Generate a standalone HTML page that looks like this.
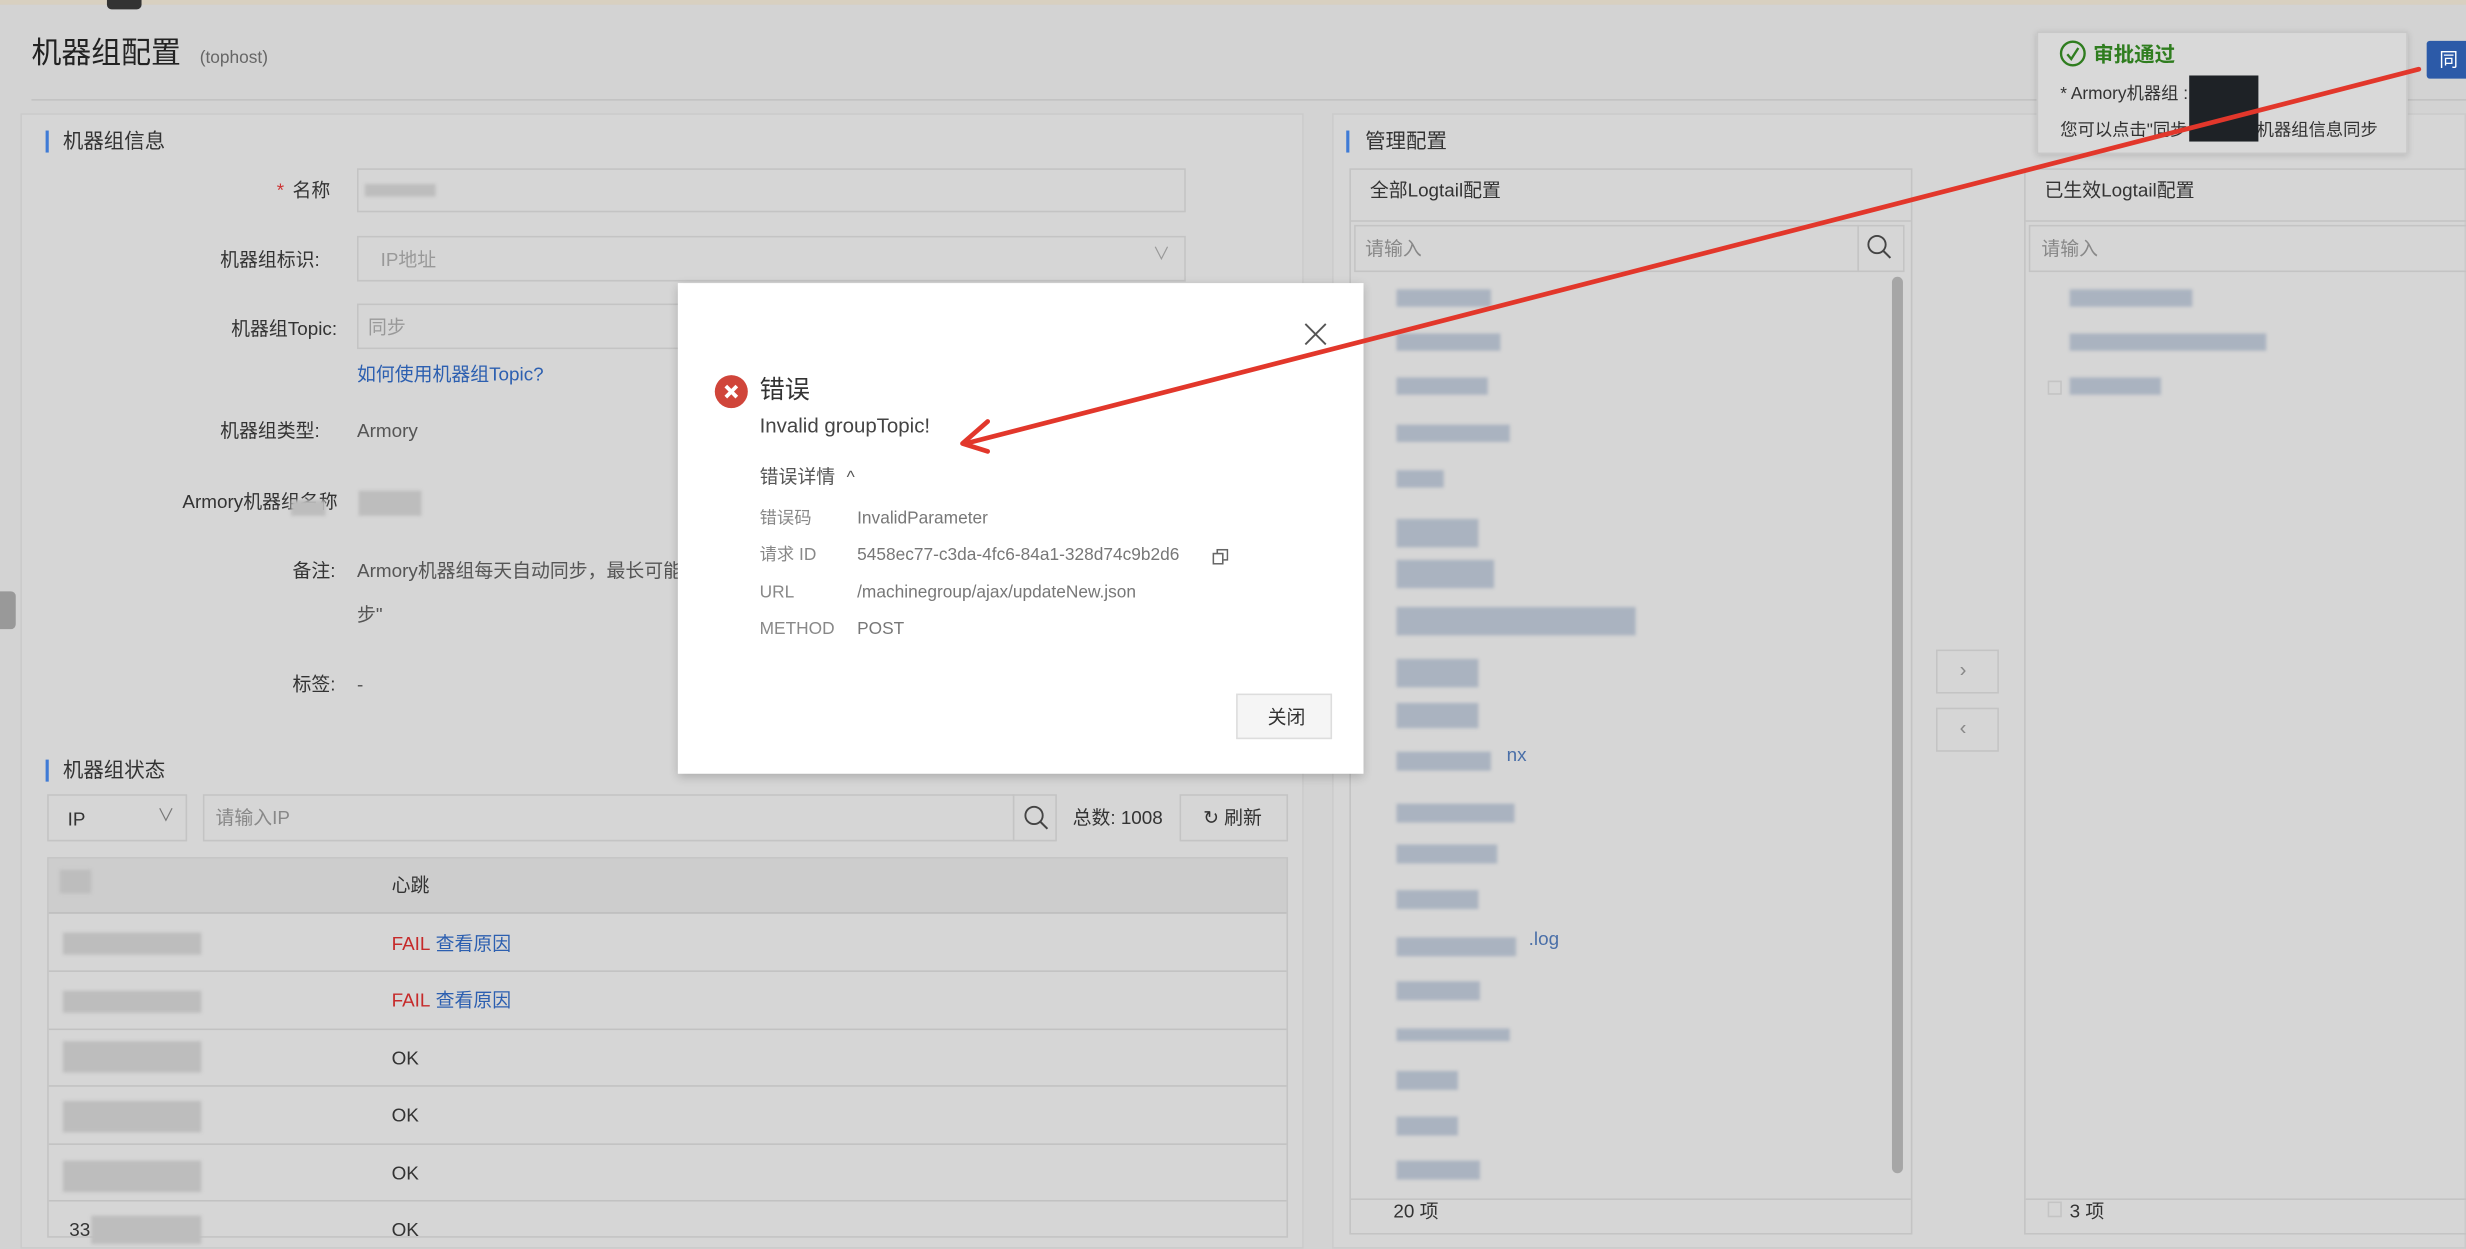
<!DOCTYPE html>
<html><head><meta charset="utf-8">
<style>
*{box-sizing:border-box;margin:0;padding:0}
html,body{width:2466px;height:1248px;overflow:hidden;background:#d3d3d3}
#w{position:absolute;left:0;top:0;width:1568px;height:794px;transform:scale(1.57270);transform-origin:0 0;font-family:"Liberation Sans","Noto Sans CJK SC",sans-serif;color:#333;font-size:12px;background:#d3d3d3}
.a{position:absolute}
.t{position:absolute;white-space:nowrap;line-height:1}
.box{position:absolute;border:1px solid #c4c4c4}
.lbl{position:absolute;right:1355px;white-space:nowrap;font-size:12px;color:#2e2e2e;line-height:1}
.bar{position:absolute;width:2px;height:14px;background:#3f7bd6}
.blur{position:absolute;background:#aab3c0;filter:blur(1px)}
.g{position:absolute;background:#bdbdbd;filter:blur(1px)}
</style></head><body><div id="w">
<div class="a" style="left:0;top:0;width:1568px;height:3px;background:#d8d0c0"></div>
<div class="a" style="left:68px;top:0;width:22px;height:6px;background:#333;border-radius:0 0 3px 3px"></div>
<div class="t" style="left:20px;top:25px;font-size:19px;color:#222">机器组配置</div>
<div class="t" style="left:127px;top:32px;font-size:11px;color:#666">(tophost)</div>
<div class="a" style="left:20px;top:63px;width:1548px;height:1px;background:#c2c2c2"></div>
<div class="a" style="left:0;top:376px;width:10px;height:24px;background:#999;border-radius:0 3px 3px 0"></div>

<!-- left panel -->
<div class="a" style="left:13px;top:72px;width:816px;height:722px;background:#d6d6d6;border:1px solid #cbcbcb"></div>
<div class="bar" style="left:29px;top:83px"></div>
<div class="t" style="left:40px;top:83px;font-size:13px;color:#333">机器组信息</div>

<div class="t" style="left:176px;top:115px;color:#c33">*</div><div class="t" style="left:186px;top:115px">名称</div>
<div class="box" style="left:227px;top:107px;width:527px;height:28px"></div>
<div class="g" style="left:232px;top:117px;width:45px;height:8px"></div>
<div class="t" style="left:140px;top:159px">机器组标识:</div>
<div class="box" style="left:227px;top:150px;width:527px;height:29px"></div>
<div class="t" style="left:242px;top:159px;color:#999">IP地址</div>
<div class="t" style="left:733px;top:157px;color:#999;font-size:11px">∨</div>
<div class="t" style="left:147px;top:203px">机器组Topic:</div>
<div class="box" style="left:227px;top:193px;width:260px;height:29px"></div>
<div class="t" style="left:234px;top:202px;color:#999">同步</div>
<div class="t" style="left:227px;top:232px;color:#2c5fb0">如何使用机器组Topic?</div>
<div class="t" style="left:140px;top:268px">机器组类型:</div>
<div class="t" style="left:227px;top:268px;color:#555">Armory</div>
<div class="t" style="left:116px;top:313px">Armory机器组名称</div>
<div class="g" style="left:185px;top:318px;width:22px;height:10px"></div>
<div class="g" style="left:228px;top:312px;width:40px;height:16px"></div>
<div class="t" style="left:186px;top:357px">备注:</div>
<div class="t" style="left:227px;top:357px;color:#555">Armory机器组每天自动同步，最长可能天</div>
<div class="t" style="left:227px;top:385px;color:#555">步"</div>
<div class="t" style="left:186px;top:429px">标签:</div>
<div class="t" style="left:227px;top:429px;color:#555">-</div>

<div class="bar" style="left:29px;top:483px"></div>
<div class="t" style="left:40px;top:483px;font-size:13px">机器组状态</div>
<div class="box" style="left:30px;top:505px;width:89px;height:30px"></div>
<div class="t" style="left:43px;top:515px">IP</div>
<div class="t" style="left:100px;top:514px;color:#777;font-size:11px">∨</div>
<div class="box" style="left:129px;top:505px;width:543px;height:30px"></div>
<div class="a" style="left:644px;top:505px;width:1px;height:30px;background:#c4c4c4"></div>
<div class="t" style="left:137px;top:514px;color:#888">请输入IP</div>
<svg class="a" style="left:650px;top:511px" width="18" height="18"><circle cx="7.5" cy="7.5" r="5.5" fill="none" stroke="#444" stroke-width="1.2"/><path d="M11.5 11.5L16 16" stroke="#444" stroke-width="1.3"/></svg>
<div class="t" style="left:682px;top:514px">总数: 1008</div>
<div class="box" style="left:750px;top:505px;width:69px;height:30px"></div>
<div class="t" style="left:765px;top:514px">↻ 刷新</div>

<div class="box" style="left:30px;top:545px;width:789px;height:242px"></div>
<div class="a" style="left:31px;top:546px;width:787px;height:34px;background:#cdcdcd"></div>
<div class="t" style="left:249px;top:557px">心跳</div>
<div class="g" style="left:38px;top:553px;width:20px;height:15px"></div>
<div class="a" style="left:31px;top:580px;width:787px;height:1px;background:#bcbcbc"></div>
<div class="a" style="left:31px;top:617px;width:787px;height:1px;background:#c2c2c2"></div>
<div class="a" style="left:31px;top:654px;width:787px;height:1px;background:#c2c2c2"></div>
<div class="a" style="left:31px;top:690px;width:787px;height:1px;background:#c2c2c2"></div>
<div class="a" style="left:31px;top:727px;width:787px;height:1px;background:#c2c2c2"></div>
<div class="a" style="left:31px;top:763px;width:787px;height:1px;background:#c2c2c2"></div>
<div class="g" style="left:40px;top:593px;width:88px;height:14px"></div>
<div class="g" style="left:40px;top:630px;width:88px;height:14px"></div>
<div class="g" style="left:40px;top:662px;width:88px;height:20px"></div>
<div class="g" style="left:40px;top:700px;width:88px;height:20px"></div>
<div class="g" style="left:40px;top:738px;width:88px;height:20px"></div>
<div class="g" style="left:58px;top:773px;width:70px;height:18px"></div>
<div class="t" style="left:249px;top:594px;color:#c62a2a">FAIL</div><div class="t" style="left:277px;top:594px;color:#2c5fb0">查看原因</div>
<div class="t" style="left:249px;top:630px;color:#c62a2a">FAIL</div><div class="t" style="left:277px;top:630px;color:#2c5fb0">查看原因</div>
<div class="t" style="left:249px;top:667px">OK</div>
<div class="t" style="left:249px;top:703px">OK</div>
<div class="t" style="left:249px;top:740px">OK</div>
<div class="t" style="left:44px;top:776px">33</div>
<div class="t" style="left:249px;top:776px">OK</div>

<!-- right panel -->
<div class="a" style="left:847px;top:72px;width:721px;height:722px;background:#d6d6d6;border:1px solid #cbcbcb"></div>
<div class="bar" style="left:856px;top:83px"></div>
<div class="t" style="left:868px;top:83px;font-size:13px">管理配置</div>
<div class="box" style="left:858px;top:107px;width:358px;height:678px"></div>
<div class="a" style="left:859px;top:140px;width:356px;height:1px;background:#c4c4c4"></div>
<div class="t" style="left:871px;top:115px">全部Logtail配置</div>
<div class="box" style="left:861px;top:143px;width:350px;height:30px"></div>
<div class="a" style="left:1181px;top:143px;width:1px;height:30px;background:#c4c4c4"></div>
<div class="t" style="left:868px;top:152px;color:#888">请输入</div>
<svg class="a" style="left:1186px;top:148px" width="18" height="18"><circle cx="7.5" cy="7.5" r="5.5" fill="none" stroke="#444" stroke-width="1.2"/><path d="M11.5 11.5L16 16" stroke="#444" stroke-width="1.3"/></svg>
<div class="a" style="left:1203px;top:176px;width:7px;height:570px;background:#a6a6a6;border-radius:4px"></div>
<div class="a" style="left:859px;top:762px;width:356px;height:1px;background:#c4c4c4"></div>
<div class="t" style="left:886px;top:764px">20 项</div>
<div class="blur" style="left:888px;top:184px;width:60px;height:11px"></div>
<div class="blur" style="left:888px;top:212px;width:66px;height:11px"></div>
<div class="blur" style="left:888px;top:240px;width:58px;height:11px"></div>
<div class="blur" style="left:888px;top:270px;width:72px;height:11px"></div>
<div class="blur" style="left:888px;top:299px;width:30px;height:11px"></div>
<div class="blur" style="left:888px;top:330px;width:52px;height:18px"></div>
<div class="blur" style="left:888px;top:356px;width:62px;height:18px"></div>
<div class="blur" style="left:888px;top:386px;width:152px;height:18px"></div>
<div class="blur" style="left:888px;top:419px;width:52px;height:18px"></div>
<div class="blur" style="left:888px;top:447px;width:52px;height:16px"></div>
<div class="blur" style="left:888px;top:478px;width:60px;height:12px"></div>
<div class="blur" style="left:888px;top:511px;width:75px;height:12px"></div>
<div class="blur" style="left:888px;top:537px;width:64px;height:12px"></div>
<div class="blur" style="left:888px;top:566px;width:52px;height:12px"></div>
<div class="blur" style="left:888px;top:596px;width:76px;height:12px"></div>
<div class="blur" style="left:888px;top:624px;width:53px;height:12px"></div>
<div class="blur" style="left:888px;top:654px;width:72px;height:8px"></div>
<div class="blur" style="left:888px;top:681px;width:39px;height:12px"></div>
<div class="blur" style="left:888px;top:710px;width:39px;height:12px"></div>
<div class="blur" style="left:888px;top:738px;width:53px;height:12px"></div>
<div class="t" style="left:958px;top:474px;color:#4a6fa8">nx</div>
<div class="t" style="left:972px;top:591px;color:#4a6fa8">.log</div>

<div class="box" style="left:1231px;top:413px;width:40px;height:28px"></div>
<div class="t" style="left:1246px;top:419px;color:#888;font-size:13px">›</div>
<div class="box" style="left:1231px;top:450px;width:40px;height:28px"></div>
<div class="t" style="left:1246px;top:456px;color:#888;font-size:13px">‹</div>

<div class="box" style="left:1287px;top:107px;width:290px;height:678px"></div>
<div class="a" style="left:1288px;top:140px;width:280px;height:1px;background:#c4c4c4"></div>
<div class="t" style="left:1300px;top:115px">已生效Logtail配置</div>
<div class="box" style="left:1290px;top:143px;width:290px;height:30px"></div>
<div class="t" style="left:1298px;top:152px;color:#888">请输入</div>
<div class="blur" style="left:1316px;top:184px;width:78px;height:11px"></div>
<div class="blur" style="left:1316px;top:212px;width:125px;height:11px"></div>
<div class="blur" style="left:1316px;top:240px;width:58px;height:11px"></div>
<div class="box" style="left:1302px;top:242px;width:9px;height:9px"></div>
<div class="a" style="left:1288px;top:762px;width:280px;height:1px;background:#c4c4c4"></div>
<div class="box" style="left:1302px;top:764px;width:9px;height:10px"></div>
<div class="t" style="left:1316px;top:764px">3 项</div>

<!-- popover -->
<div class="a" style="left:1295px;top:20px;width:236px;height:78px;background:#d9d9d9;border:1px solid #c8c8c8;box-shadow:0 1px 4px rgba(0,0,0,.15)"></div>
<svg class="a" style="left:1309px;top:25px" width="18" height="18"><circle cx="9" cy="9" r="7.5" fill="none" stroke="#2f7d1f" stroke-width="1.5"/><path d="M5.5 9.5l2.5 3 4.5-7" fill="none" stroke="#2f7d1f" stroke-width="1.5"/></svg>
<div class="t" style="left:1331px;top:28px;font-size:13px;color:#2f7d1f;font-weight:bold">审批通过</div>
<div class="t" style="left:1310px;top:55px;font-size:11px">* Armory机器组 :</div>
<div class="t" style="left:1310px;top:78px;font-size:11px">您可以点击"同步　　　　机器组信息同步</div>
<div class="a" style="left:1392px;top:48px;width:44px;height:42px;background:#1e2226"></div>
<div class="a" style="left:1543px;top:26px;width:25px;height:24px;background:#2c5aa8;border-radius:2px 0 0 2px"></div>
<div class="t" style="left:1551px;top:32px;color:#fff;font-size:12px">同</div>

<!-- dialog -->
<div class="a" style="left:431px;top:180px;width:436px;height:312px;background:#fff;box-shadow:0 2px 6px rgba(0,0,0,.2)"></div>
<svg class="a" style="left:829px;top:205px" width="15" height="15"><path d="M1 1L14 14M14 1L1 14" stroke="#555" stroke-width="1.2"/></svg>
<svg class="a" style="left:454px;top:238px" width="22" height="22"><circle cx="11" cy="11" r="10.5" fill="#d0453a"/><path d="M7.5 7.5l7 7M14.5 7.5l-7 7" stroke="#fff" stroke-width="2.4"/></svg>
<div class="t" style="left:483px;top:241px;font-size:16px;color:#333">错误</div>
<div class="t" style="left:483px;top:264px;font-size:13px;color:#444">Invalid groupTopic!</div>
<div class="t" style="left:483px;top:297px;font-size:12px;color:#555">错误详情 <span style="font-size:11px;margin-left:4px">^</span></div>
<div class="t" style="left:483px;top:325px;font-size:11px;color:#888">错误码</div><div class="t" style="left:545px;top:325px;font-size:11px;color:#777">InvalidParameter</div>
<div class="t" style="left:483px;top:348px;font-size:11px;color:#888">请求 ID</div><div class="t" style="left:545px;top:348px;font-size:11px;color:#777">5458ec77-c3da-4fc6-84a1-328d74c9b2d6</div>
<svg class="a" style="left:771px;top:349px" width="10" height="10"><rect x="0.5" y="3" width="6" height="6.5" fill="none" stroke="#666"/><path d="M3 3V0.5h6.5V7H7" fill="none" stroke="#666"/></svg>
<div class="t" style="left:483px;top:372px;font-size:11px;color:#888">URL</div><div class="t" style="left:545px;top:372px;font-size:11px;color:#777">/machinegroup/ajax/updateNew.json</div>
<div class="t" style="left:483px;top:395px;font-size:11px;color:#888">METHOD</div><div class="t" style="left:545px;top:395px;font-size:11px;color:#777">POST</div>
<div class="a" style="left:786px;top:441px;width:61px;height:29px;background:#f5f5f5;border:1px solid #ddd"></div>
<div class="t" style="left:806px;top:450px;font-size:12px;color:#333">关闭</div>

<!-- arrow -->
<svg class="a" style="left:0;top:0" width="1568" height="794"><path d="M1538 44L614 282" stroke="#e2372b" stroke-width="3" stroke-linecap="round"/><path d="M628 268L612 282L628 287" fill="none" stroke="#e2372b" stroke-width="3" stroke-linecap="round" stroke-linejoin="round"/></svg>
</div></body></html>
